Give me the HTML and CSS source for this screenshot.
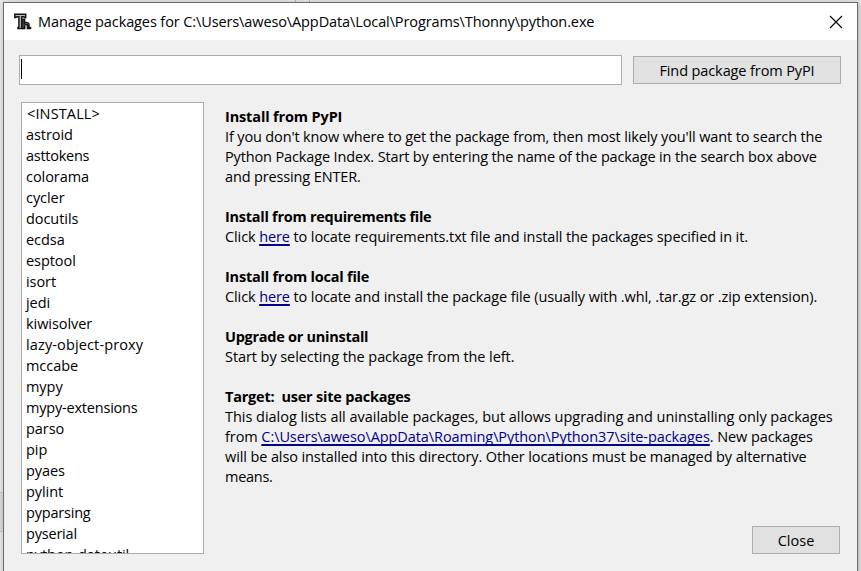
FILE: index.html
```
<!DOCTYPE html>
<html lang="en">
<head>
<meta charset="utf-8">
<title>Manage packages</title>
<link rel="stylesheet" href="styles.css">
</head>
<body>
<main class="window">
  <header class="titlebar">
    <svg class="logo" width="18" height="17" viewBox="0 0 18 17" fill="#bbb" stroke="#141414" stroke-width="1.5">
      <path d="M.8 1.2h10.9v3.2h-1.2L9.7 3.7H7.7v10.1l.9.7v.9H4v-.9l.9-.7V3.7H3L2 4.4H.8z"/>
      <path d="M8.9 6.2h1.7v4c1.5-1 4.4-.8 4.4 1.2v2.7l1.5.4v.9h-3.1v-3.3c0-1-2.7-.9-2.7.2v3.1H8.9z"/>
    </svg>
    <h1 class="title t10">Manage packages for C:\Users\aweso\AppData\Local\Programs\Thonny\python.exe</h1>
    <svg class="x" width="14" height="14" viewBox="0 0 14 14" stroke="#000" stroke-width="1.1"><path d="M1 1l12 12M13 1L1 13"/></svg>
  </header>
  <div class="search"><div class="field"><i class="caret"></i></div><button class="btn find t10">Find package from PyPI</button></div>
  <div class="body">
    <ul class="list"><li class="wide first">&lt;INSTALL&gt;</li><li>astroid</li><li class="t26">asttokens</li><li>colorama</li><li>cycler</li><li>docutils</li><li>ecdsa</li><li>esptool</li><li>isort</li><li>jedi</li><li>kiwisolver</li><li class="wide">lazy-object-proxy</li><li>mccabe</li><li>mypy</li><li class="t20">mypy-extensions</li><li>parso</li><li>pip</li><li>pyaes</li><li>pylint</li><li class="t20">pyparsing</li><li class="t20">pyserial</li><li>python-dateutil</li></ul>
    <div class="info">
      <section><h2 class="t14">Install from PyPI</h2>
        <p class="t14">If you don't know where to get the package from, then most likely you'll want to search the<br>Python Package Index. Start by entering the name of the package in the search box above<br>and pressing ENTER.</p></section>
      <section><h2 class="t26">Install from requirements file</h2>
        <p class="t10">Click <a>here</a> to locate requirements.txt file and install the packages specified in it.</p></section>
      <section><h2>Install from local file</h2>
        <p class="t10">Click <a>here</a> to locate and install the package file (usually with .whl, .tar.gz or .zip extension).</p></section>
      <section><h2 class="t26">Upgrade or uninstall</h2>
        <p class="t8">Start by selecting the package from the left.</p></section>
      <section><h2>Target:&nbsp; user site packages</h2>
        <p class="t10"><span class="t3">This dialog lists all available packages, but allows upgrading and uninstalling only packages</span><br><span class="t8">from <a>C:\Users\aweso\AppData\Roaming\Python\Python37\site-packages</a>. New packages</span><br>will be also installed into this directory. Other locations must be managed by alternative<br><span class="t26">means.</span></p></section>
      <button class="btn close">Close</button>
    </div>
  </div>
</main>
</body>
</html>
```
FILE: styles.css
```
* { box-sizing: border-box; }
body { margin: 0; height: 571px; overflow: hidden; padding: 2px 3px 0; background: linear-gradient(#b4b4b4, #b4b4b4) 295px 0 / 1px 2px no-repeat, linear-gradient(#b4b4b4, #b4b4b4) 309px 0 / 1px 2px no-repeat, linear-gradient(#c4c4c4, #c4c4c4) 0 492px / 3px 1px no-repeat, linear-gradient(#dadada, #dadada) 0 493px / 3px 38px no-repeat, linear-gradient(#c4c4c4, #c4c4c4) 0 531px / 3px 1px no-repeat, #e6e6e6; color: #000; font: 14.5px/20px "Open Sans", sans-serif; }
.window { width: 855px; height: 580px; border: 1px solid #6c6c6c; background: #f0f0f0; box-shadow: 1px 1px 5px rgba(0, 0, 0, .25); }
.titlebar { height: 37px; background: #fff; display: flex; align-items: center; padding: 0 14px 0 10px; }
.logo { margin-right: 6px; }
.title { margin: 0; font: inherit; flex: 1; white-space: nowrap; }
.search { display: flex; align-items: center; gap: 11px; margin: 15px 16px 0 15px; }
.field { width: 603px; height: 30px; border: 1px solid #abadb3; background: #fff; }
.caret { float: left; width: 1px; height: 20px; margin: 3px 0 0 1px; background: #000; }
.btn { font: inherit; color: #000; border: 1px solid #adadad; background: #e1e1e1; height: 28px; padding: 1px 0 0; }
.find { width: 208px; }
.body { display: flex; margin: 17px 17px 0 17px; }
.list { width: 183px; height: 452px; margin: 0 21px 0 0; padding: 0 4px; list-style: none; border: 1px solid #ababab; background: #fff; overflow: hidden; line-height: 21px; letter-spacing: -.06px; }
.first { padding-left: 1px; }
.info { flex: 1; display: flex; flex-direction: column; white-space: nowrap; padding-top: 5px; }
h2 { font: inherit; font-weight: 700; margin: 0; letter-spacing: -.22px; }
p { margin: 0 0 20px; }
a { color: #00008b; text-decoration: underline 2px; text-underline-offset: 2px; text-decoration-skip-ink: none; }
.close { width: 88px; align-self: flex-end; margin-top: auto; }
.wide { letter-spacing: .13px; }
.t3 { letter-spacing: -.025px; }
.t8 { letter-spacing: -.075px; }
.t10 { letter-spacing: -.107px; }
.t14 { letter-spacing: -.14px; }
.t20 { letter-spacing: -.2px; }
.t26 { letter-spacing: -.27px; }
```
